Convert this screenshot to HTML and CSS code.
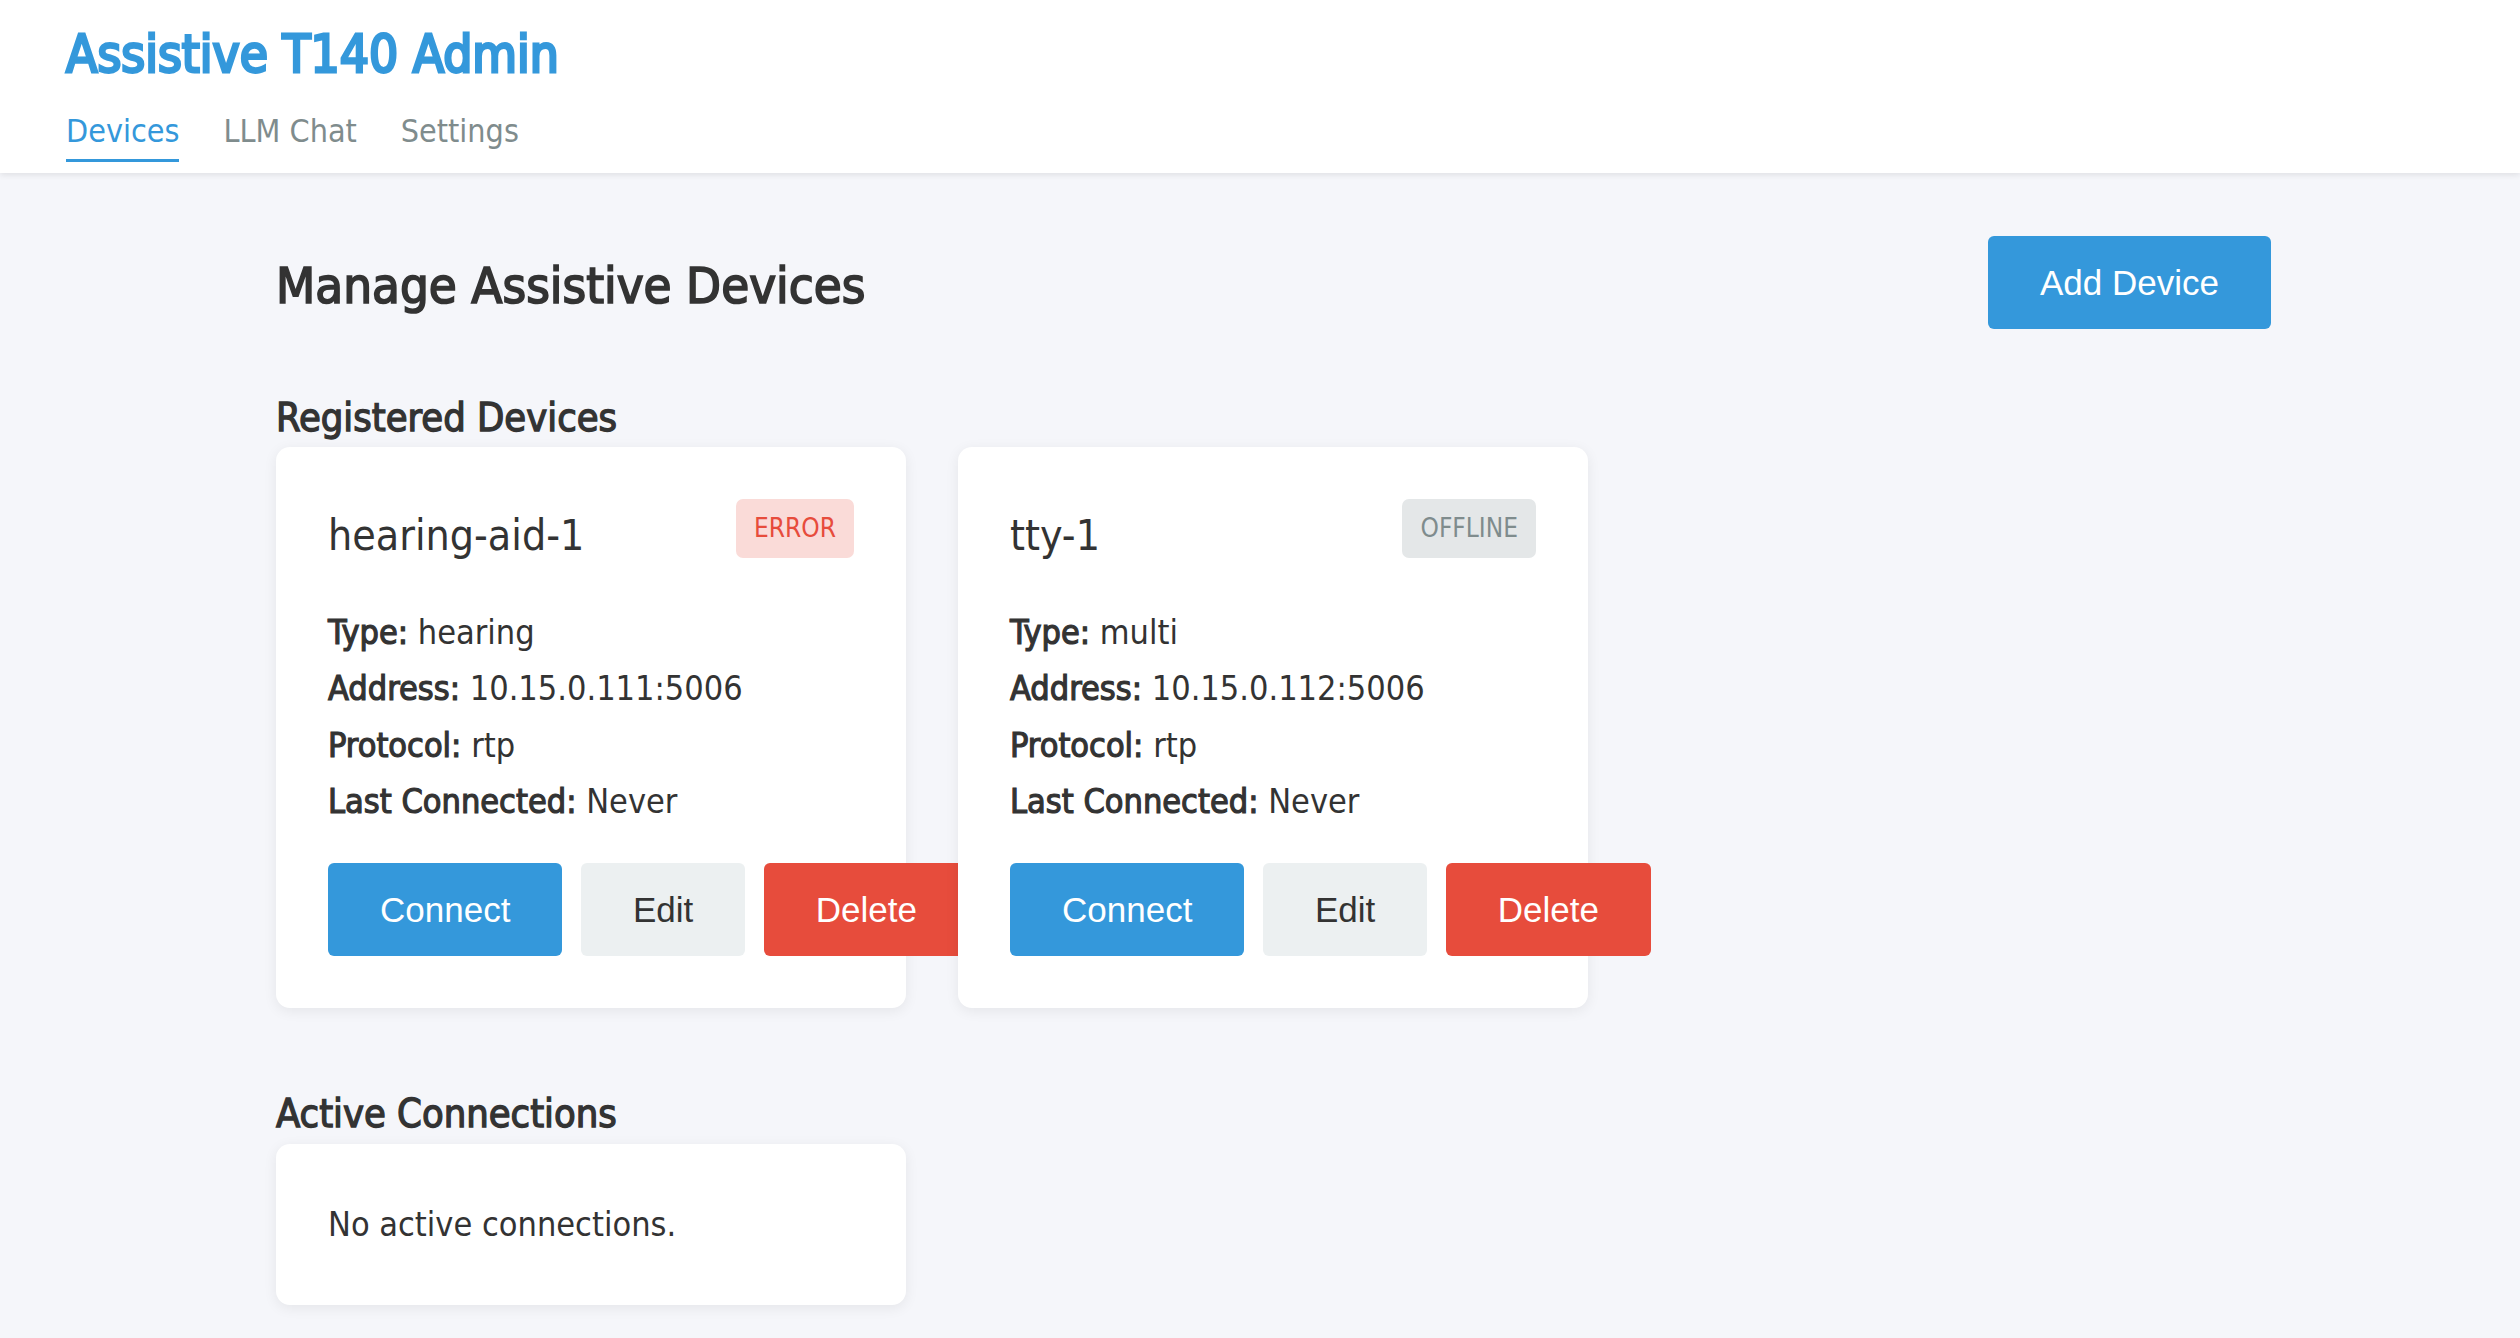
FILE: index.html
```html
<!DOCTYPE html>
<html lang="en">
<head>
<meta charset="utf-8">
<title>Assistive T140 Admin</title>
<link rel="stylesheet" href="styles.css">
</head>
<body>
  <header class="topbar">
    <div class="brand">Assistive T140 Admin</div>
    <nav class="nav">
      <a class="nav-link active">Devices</a>
      <a class="nav-link">LLM Chat</a>
      <a class="nav-link">Settings</a>
    </nav>
  </header>

  <main class="main">
    <div class="page-head">
      <h1 class="page-title">Manage Assistive Devices</h1>
      <button class="btn btn-primary">Add Device</button>
    </div>

    <h2 class="section-title first">Registered Devices</h2>
    <div class="card-grid">
      <div class="card">
        <div class="card-head">
          <h3 class="device-name">hearing-aid-1</h3>
          <span class="badge badge-error">ERROR</span>
        </div>
        <div class="details">
          <div><span class="label">Type:</span> hearing</div>
          <div><span class="label">Address:</span> 10.15.0.111:5006</div>
          <div><span class="label">Protocol:</span> rtp</div>
          <div><span class="label">Last Connected:</span> Never</div>
        </div>
        <div class="actions">
          <button class="btn btn-primary">Connect</button>
          <button class="btn btn-light">Edit</button>
          <button class="btn btn-danger">Delete</button>
        </div>
      </div>

      <div class="card">
        <div class="card-head">
          <h3 class="device-name">tty-1</h3>
          <span class="badge badge-offline">OFFLINE</span>
        </div>
        <div class="details">
          <div><span class="label">Type:</span> multi</div>
          <div><span class="label">Address:</span> 10.15.0.112:5006</div>
          <div><span class="label">Protocol:</span> rtp</div>
          <div><span class="label">Last Connected:</span> Never</div>
        </div>
        <div class="actions">
          <button class="btn btn-primary">Connect</button>
          <button class="btn btn-light">Edit</button>
          <button class="btn btn-danger">Delete</button>
        </div>
      </div>
    </div>

    <h2 class="section-title">Active Connections</h2>
    <div class="card-grid">
      <div class="card card-empty">No active connections.</div>
    </div>
  </main>
</body>
</html>
```

FILE: styles.css
```css
* {
  box-sizing: border-box;
}

html, body {
  margin: 0;
  padding: 0;
}

body {
  background: #f5f6fa;
  color: #333333;
  font-family: "DejaVu Sans Condensed", "DejaVu Sans", sans-serif;
  font-stretch: condensed;
  min-height: 1338px;
}

/* Header */
.topbar {
  background: #ffffff;
  padding: 25px 66px 11px;
  box-shadow: 0 2px 6px rgba(0, 0, 0, 0.09);
  position: relative;
}

.brand {
  color: #3498db;
  font-size: 51px;
  line-height: 59px;
  -webkit-text-stroke: 2.8px #3498db;
}

.nav {
  display: flex;
  gap: 44px;
  margin-top: 29px;
}

.nav-link {
  font-size: 32px;
  line-height: 37px;
  color: #7f8c8d;
  padding-bottom: 9px;
  border-bottom: 3px solid transparent;
}

.nav-link.active {
  color: #3498db;
  border-bottom-color: #3498db;
}

/* Main */
.main {
  padding: 63px 249px 40px 276px;
}

.page-head {
  display: flex;
  justify-content: space-between;
  align-items: flex-start;
}

.page-title {
  margin: 21px 0 0;
  font-size: 50.6px;
  line-height: 58px;
  font-weight: normal;
  -webkit-text-stroke: 1.7px #333333;
}

.section-title {
  margin: 82.5px 0 7.5px;
  font-size: 39.5px;
  line-height: 46px;
  font-weight: normal;
  -webkit-text-stroke: 1.3px #333333;
}

.section-title.first {
  margin-top: 64.5px;
}

.card-grid {
  display: grid;
  grid-template-columns: repeat(3, 630px);
  column-gap: 52px;
}

.card {
  background: #ffffff;
  border-radius: 14px;
  padding: 52px;
  box-shadow: 0 3px 14px rgba(0, 0, 0, 0.07);
}

.card-head {
  display: flex;
  justify-content: space-between;
  align-items: flex-start;
}

.device-name {
  margin: 12px 0 0;
  font-size: 42.5px;
  line-height: 49px;
  font-weight: normal;
}

.badge {
  font-size: 26px;
  line-height: 31px;
  padding: 14px 18px;
  border-radius: 7px;
}

.badge-error {
  background: #fadbd8;
  color: #e74c3c;
}

.badge-offline {
  background: #e4e7e8;
  color: #7f8c8d;
}

.details {
  margin-top: 44px;
  font-size: 34px;
  line-height: 56.4px;
}

.label {
  -webkit-text-stroke: 1.15px #333333;
}

.actions {
  display: flex;
  gap: 18.5px;
  margin-top: 33px;
}

.btn {
  flex-shrink: 0;
  font-family: "Liberation Sans", Arial, sans-serif;
  font-size: 35px;
  line-height: 41px;
  padding: 26px 52px;
  border: none;
  border-radius: 6px;
  cursor: pointer;
  white-space: nowrap;
}

.btn-primary {
  background: #3498db;
  color: #ffffff;
}

.btn-light {
  background: #ecf0f1;
  color: #333333;
}

.btn-danger {
  background: #e74c3c;
  color: #ffffff;
}

.card-empty {
  padding: 52px 52px 52px;
  font-size: 34px;
  line-height: 57px;
}
```
